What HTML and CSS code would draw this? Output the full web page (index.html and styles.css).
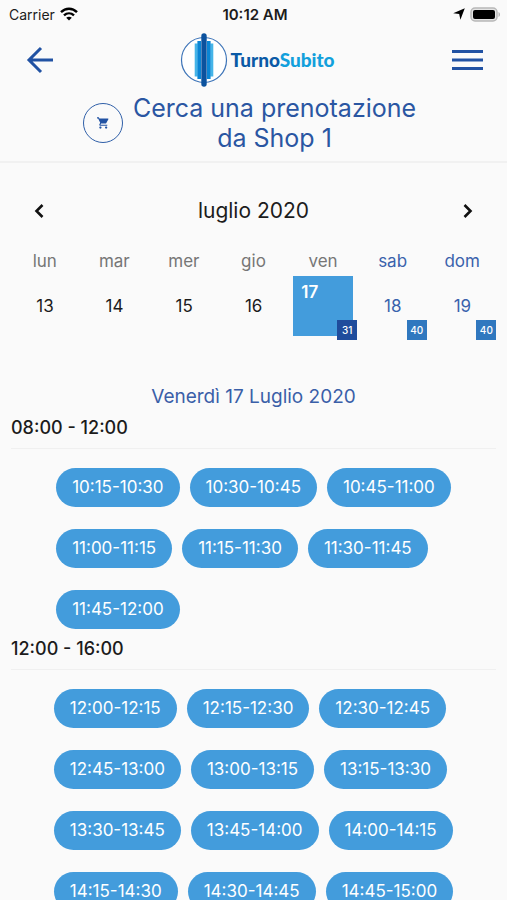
FILE: index.html
```html
<!DOCTYPE html>
<html lang="it">
<head>
<meta charset="utf-8">
<meta name="viewport" content="width=device-width, initial-scale=1">
<title>TurnoSubito</title>
<link rel="stylesheet" href="styles.css">
</head>
<body>
<div class="status">
  <div class="status-left">
    <span>Carrier</span>
    <svg width="18" height="14" viewBox="0 0 18 14" fill="none" stroke="#000" stroke-width="2.4" aria-hidden="true">
      <path d="M1 5.2C5.6.6 12.4.6 17 5.2M4 8.4c2.900-2.700 7.100-2.700 10 0"/>
      <path d="M9 13.600 6.200 10.800c1.600-1.500 4-1.500 5.600 0z" fill="#000" stroke="none"/>
    </svg>
  </div>
  <span class="status-time">10:12 AM</span>
  <div class="status-right">
    <svg width="12" height="12" viewBox="0 0 12 12" aria-hidden="true"><path d="M11.800.3 7.400 11.800 6.200 6.100.2 5.300z"/></svg>
    <svg width="31" height="15" viewBox="0 0 31 15" aria-hidden="true">
      <rect x="1" y="1" width="26" height="13" rx="4" fill="#e4e4e4" stroke="#b8b8b8" stroke-width="1.500"/>
      <rect x="3" y="3" width="22" height="9" rx="2"/>
      <path d="M28.500 5c2 .8 2 4.200 0 5z" fill="#b4b4b4"/>
    </svg>
  </div>
</div>
<header class="header">
  <div class="bar">
    <button class="icon-button" aria-label="Indietro">
      <svg width="28" height="28" viewBox="0 0 28 28" fill="none" stroke="#2152a3" stroke-width="3" aria-hidden="true"><path d="M27 14H3M15 2 3 14l12 12"/></svg>
    </button>
    <a class="logo" href="#">
      <svg width="48" height="54" viewBox="0 0 48 54" aria-hidden="true">
        <circle cx="24" cy="27" r="22.500" fill="#fff" stroke="#3d74b8" stroke-width="1.200"/>
        <path d="M16.200 10.500v33M31.800 10.500v33" stroke="#45b4e8" stroke-width="3"/>
        <path d="M19.200 8v38M28.800 8v38" stroke="#0a85d4" stroke-width="3.600"/>
        <path d="M24 3v48" stroke="#0b529e" stroke-width="5.400" stroke-linecap="round"/>
      </svg>
      <span class="brand">Turno<span class="brand-light">Subito</span></span>
    </a>
    <button class="icon-button" aria-label="Menu">
      <svg width="31" height="22" viewBox="0 0 31 22" fill="none" stroke="#2152a3" stroke-width="3" aria-hidden="true"><path d="M0 2.500h31M0 11h31M0 19.500h31"/></svg>
    </button>
  </div>
  <div class="title-row">
    <span class="shop">
      <svg width="12" height="12" viewBox="1 2 21 20" fill="#2152a3" aria-hidden="true"><path d="M7 18c-1.100 0-1.990.9-1.990 2S5.900 22 7 22s2-.9 2-2-.9-2-2-2zM1 2v2h2l3.600 7.590-1.350 2.450c-.16.280-.25.610-.25.960 0 1.100.9 2 2 2h12v-2H7.420c-.14 0-.25-.11-.25-.25l.03-.12.900-1.630h7.450c.750 0 1.410-.41 1.750-1.030l3.580-6.490A1 1 0 0 0 20 4H5.210l-.94-2H1zm16 16c-1.100 0-1.990.9-1.990 2s.890 2 1.990 2 2-.9 2-2-.9-2-2-2z"/><path d="M5 5h15l-4 7H8z"/></svg>
    </span>
    <h1>Cerca una prenotazione<br>da Shop 1</h1>
  </div>
</header>
<main>
  <section class="calendar">
    <div class="month">
      <button class="icon-button" aria-label="Settimana precedente">
        <svg width="10" height="14" viewBox="0 0 10 14" fill="none" stroke="#111" stroke-width="2.600" aria-hidden="true"><path d="M8.500 1 2.500 7l6 6"/></svg>
      </button>
      <h2>luglio 2020</h2>
      <button class="icon-button" aria-label="Settimana successiva">
        <svg width="10" height="14" viewBox="0 0 10 14" fill="none" stroke="#111" stroke-width="2.600" aria-hidden="true"><path d="m1.500 1 6 6-6 6"/></svg>
      </button>
    </div>
    <table>
      <thead>
        <tr><th>lun</th><th>mar</th><th>mer</th><th>gio</th><th>ven</th><th class="weekend">sab</th><th class="weekend">dom</th></tr>
      </thead>
      <tbody>
        <tr>
          <td><button class="day">13</button></td>
          <td><button class="day">14</button></td>
          <td><button class="day">15</button></td>
          <td><button class="day">16</button></td>
          <td><button class="day selected">17<span class="count">31</span></button></td>
          <td><button class="day weekend">18<span class="count">40</span></button></td>
          <td><button class="day weekend">19<span class="count">40</span></button></td>
        </tr>
      </tbody>
    </table>
  </section>
  <h2 class="date">Venerdì 17 Luglio 2020</h2>
  <section class="band">
    <h3>08:00 - 12:00</h3>
    <div class="slots">
      <div class="row"><button class="slot">10:15-10:30</button><button class="slot">10:30-10:45</button><button class="slot">10:45-11:00</button></div>
      <div class="row"><button class="slot">11:00-11:15</button><button class="slot">11:15-11:30</button><button class="slot">11:30-11:45</button></div>
      <div class="row"><button class="slot">11:45-12:00</button></div>
    </div>
  </section>
  <section class="band">
    <h3>12:00 - 16:00</h3>
    <div class="slots">
      <div class="row"><button class="slot">12:00-12:15</button><button class="slot">12:15-12:30</button><button class="slot">12:30-12:45</button></div>
      <div class="row"><button class="slot">12:45-13:00</button><button class="slot">13:00-13:15</button><button class="slot">13:15-13:30</button></div>
      <div class="row"><button class="slot">13:30-13:45</button><button class="slot">13:45-14:00</button><button class="slot">14:00-14:15</button></div>
      <div class="row"><button class="slot">14:15-14:30</button><button class="slot">14:30-14:45</button><button class="slot">14:45-15:00</button></div>
    </div>
  </section>
</main>
</body>
</html>
```
FILE: styles.css
```css
* {
  box-sizing: border-box;
}

html {
  scrollbar-width: none;
}

body {
  margin: 0;
  background: #fafafa;
  color: #1c1c1c;
  font-family: Inter, "Liberation Sans", sans-serif;
}

button {
  margin: 0;
  padding: 0;
  border: 0;
  background: none;
  color: inherit;
  font: inherit;
  cursor: pointer;
}

h1, h2, h3 {
  margin: 0;
  font-weight: 400;
}

svg {
  display: block;
}

.status {
  display: grid;
  grid-template-columns: 1fr auto 1fr;
  align-items: center;
  height: 28px;
  padding: 0 6px 0 9px;
  font-size: 14px;
}

.status-left, .status-right {
  display: flex;
  align-items: center;
  gap: 5px;
}

.status-right {
  justify-content: flex-end;
}

.status-time {
  font-size: 15px;
  font-weight: 600;
}

.header {
  padding-bottom: 8px;
  border-bottom: 2px solid #f1f1f1;
}

.bar {
  display: flex;
  align-items: center;
  justify-content: space-between;
  height: 64px;
  padding: 0 24px 0 26px;
}

.icon-button {
  display: flex;
}

.logo {
  display: flex;
  align-items: center;
  gap: 2px;
  margin-left: 9px;
  text-decoration: none;
}

.brand {
  padding-bottom: 2px;
  color: #0b5aa6;
  font-family: Lato, sans-serif;
  font-size: 19px;
  font-weight: 900;
}

.brand-light {
  color: #12a0dc;
}

.title-row {
  display: flex;
  align-items: center;
  justify-content: center;
  gap: 10px;
  padding: 1px 8px 0 0;
}

.shop {
  display: flex;
  align-items: center;
  justify-content: center;
  width: 40px;
  height: 40px;
  border: 1px solid #2f5fa8;
  border-radius: 50%;
}

h1 {
  color: #2a56a2;
  font-size: 25px;
  line-height: 30px;
  text-align: center;
}

.calendar {
  padding: 31px 10px 0;
}

.month {
  display: flex;
  align-items: center;
  justify-content: space-between;
  padding: 0 24px;
  line-height: 34px;
}

.month h2 {
  font-size: 21px;
}

table {
  width: 100%;
  margin-top: 21px;
  border-collapse: collapse;
  table-layout: fixed;
}

th {
  padding: 0;
  color: #767676;
  font-size: 17px;
  font-weight: 400;
  line-height: 24px;
}

td {
  padding: 3px 5px 0;
}

.day {
  position: relative;
  display: block;
  width: 60px;
  height: 60px;
  margin: 0 auto;
  font-size: 17px;
}

th.weekend, .weekend {
  color: #3a62ac;
}

.selected {
  display: flex;
  align-items: flex-start;
  padding: 6px 8px;
  background: #439cdc;
  color: #fff;
  font-weight: 600;
}

.count {
  position: absolute;
  right: -4px;
  bottom: -4px;
  width: 20px;
  background: #3078bf;
  color: #fff;
  font-size: 10px;
  font-weight: 500;
  line-height: 20px;
  text-align: center;
}

.selected .count {
  background: #1f4c9c;
}

.date {
  padding: 49px 0 6px;
  color: #3a5fa8;
  font-size: 19px;
  line-height: 24px;
  text-align: center;
}

.band {
  padding: 0 11px;
}

h3 {
  padding-bottom: 7px;
  border-bottom: 1px solid #f0f0f0;
  font-size: 18px;
  font-weight: 500;
  line-height: 26px;
}

.slots {
  display: flex;
  flex-direction: column;
  gap: 22px;
  width: fit-content;
  margin: 0 auto;
  padding: 19px 0 7px;
}

.row {
  display: flex;
  gap: 10px;
}

.slot {
  padding: 0 16px;
  border-radius: 20px;
  background: #439cdc;
  color: #fff;
  font-size: 17px;
  line-height: 39px;
  white-space: nowrap;
}
```
